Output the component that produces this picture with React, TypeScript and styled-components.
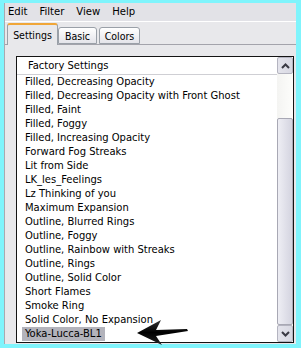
import styled, { createGlobalStyle } from 'styled-components';

const GlobalStyle = createGlobalStyle`
    html, body {
        margin: 0;
        padding: 0;
        background: #7ff4fc;
    }
    body {
        font-family: "DejaVu Sans Condensed", "DejaVu Sans", "Liberation Sans", sans-serif;
        font-stretch: condensed;
        color: #000;
    }
`;

const Frame = styled.div`
    position: relative;
    box-sizing: border-box;
    width: 301px;
    height: 348px;
    padding: 3px 5px 4px 4px;
    background: #7ff4fc;
`;

const Window = styled.div`
    display: flex;
    flex-direction: column;
    height: 100%;
    background: #e8e8eb;
    border-left: 1px solid #a9a9b0;
`;

const MenuBar = styled.div`
    display: flex;
    align-items: center;
    gap: 12px;
    height: 18px;
    padding-left: 3px;
    background: #e2e2e7;
    border-bottom: 1px solid #ffffff;
    font-size: 11.2px;
`;

const MenuItem = styled.span`
    line-height: 18px;
`;

const TabStrip = styled.div`
    display: flex;
    align-items: flex-end;
    height: 22px;
    padding-left: 2px;
    border-bottom: 1px solid #a3a3ab;
    font-size: 10.5px;
`;

const Tab = styled.div<{ $active?: boolean; $w: number }>`
    box-sizing: border-box;
    display: flex;
    align-items: center;
    justify-content: center;
    margin-bottom: ${p => (p.$active ? '-1px' : '0')};
    margin-right: ${p => (p.$active ? '0' : '2px')};
    width: ${p => p.$w}px;
    height: ${p => (p.$active ? '22px' : '17px')};
    border: 1px solid #9aa0a8;
    border-bottom: ${p => (p.$active ? 'none' : '1px solid #9aa0a8')};
    border-top: ${p => (p.$active ? '2px solid #f0a638' : '1px solid #9aa0a8')};
    border-radius: 3px 3px 0 0;
    background: ${p =>
        p.$active ? '#e8e8eb' : 'linear-gradient(#ffffff, #e4e4ea)'};
`;

const Panel = styled.div`
    flex: 1;
    display: flex;
    padding: 11px 2px 1px 11px;
    min-height: 0;
`;

const ListBox = styled.div`
    flex: 1;
    display: flex;
    background: #ffffff;
    border: 1px solid #141414;
    font-size: 11.1px;
`;

const ListContent = styled.div`
    flex: 1;
    overflow: hidden;
`;

const Header = styled.div`
    height: 17px;
    line-height: 17px;
    padding-left: 11px;
    border-bottom: 1px solid #cfcfd4;
`;

const Item = styled.div`
    height: 14px;
    line-height: 14px;
    padding-left: 5px;
    white-space: nowrap;
`;

const Label = styled.span<{ $selected?: boolean }>`
    display: inline-block;
    padding: 0 3px;
    background: ${p => (p.$selected ? '#b3b3bb' : 'transparent')};
`;

const ScrollBar = styled.div`
    display: flex;
    flex-direction: column;
    width: 16px;
    background: linear-gradient(90deg, #f4f4f2, #fdfdfb);
`;

const ScrollButton = styled.div`
    box-sizing: border-box;
    display: flex;
    align-items: center;
    justify-content: center;
    height: 17px;
    border: 1px solid #b4b4c0;
    border-radius: 2px;
    background: linear-gradient(90deg, #e4e4ec, #d8d8e2);
`;

const Track = styled.div`
    flex: 1;
    display: flex;
    flex-direction: column;
    padding-top: 44px;
`;

const Thumb = styled.div`
    flex: 1;
    box-sizing: border-box;
    border: 1px solid #a8a8b4;
    border-radius: 2px;
    background: linear-gradient(90deg, #eeeef4, #d4d4e0);
`;

const Pointer = styled.svg`
    position: absolute;
    left: 135px;
    top: 318px;
`;

const items = [
    'Filled, Decreasing Opacity',
    'Filled, Decreasing Opacity with Front Ghost',
    'Filled, Faint',
    'Filled, Foggy',
    'Filled, Increasing Opacity',
    'Forward Fog Streaks',
    'Lit from Side',
    'LK_les_Feelings',
    'Lz Thinking of you',
    'Maximum Expansion',
    'Outline, Blurred Rings',
    'Outline, Foggy',
    'Outline, Rainbow with Streaks',
    'Outline, Rings',
    'Outline, Solid Color',
    'Short Flames',
    'Smoke Ring',
    'Solid Color, No Expansion',
    'Yoka-Lucca-BL1',
];

const Chevron = ({ up }: { up?: boolean }) => (
    <svg width="9" height="6" viewBox="0 0 9 6">
        <path
            d={up ? 'M1 5 L4.5 1.5 L8 5' : 'M1 1 L4.5 4.5 L8 1'}
            fill="none"
            stroke="#3a3a44"
            strokeWidth="2"
        />
    </svg>
);

const App = () => {
    return (
        <Frame>
            <GlobalStyle />
            <Window>
                <MenuBar>
                    <MenuItem>Edit</MenuItem>
                    <MenuItem>Filter</MenuItem>
                    <MenuItem>View</MenuItem>
                    <MenuItem>Help</MenuItem>
                </MenuBar>
                <TabStrip>
                    <Tab $active $w={51}>Settings</Tab>
                    <Tab $w={39}>Basic</Tab>
                    <Tab $w={41}>Colors</Tab>
                </TabStrip>
                <Panel>
                    <ListBox>
                        <ListContent>
                            <Header>Factory Settings</Header>
                            {items.map((it, i) => (
                                <Item key={it}>
                                    <Label $selected={i === items.length - 1}>{it}</Label>
                                </Item>
                            ))}
                        </ListContent>
                        <ScrollBar>
                            <ScrollButton><Chevron up /></ScrollButton>
                            <Track><Thumb /></Track>
                            <ScrollButton><Chevron /></ScrollButton>
                        </ScrollBar>
                    </ListBox>
                </Panel>
            </Window>
            <Pointer width="55" height="30" viewBox="0 0 55 30">
                <defs>
                    <linearGradient id="arr" x1="0" y1="0" x2="0" y2="1">
                        <stop offset="0" stopColor="#333" />
                        <stop offset="0.5" stopColor="#000" />
                        <stop offset="1" stopColor="#222" />
                    </linearGradient>
                </defs>
                <polygon
                    points="2,15 26,2 21,12 52,11 53,13 21,18 27,27"
                    fill="url(#arr)"
                />
            </Pointer>
        </Frame>
    );
};

export default App;
